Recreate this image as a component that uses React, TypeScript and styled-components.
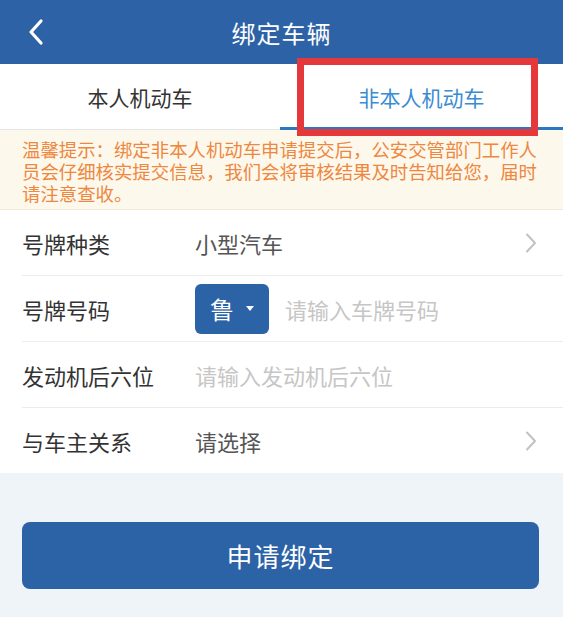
import styled, { createGlobalStyle } from 'styled-components';
import { FC } from 'react';

const GlobalStyle = createGlobalStyle`
	html, body {
		margin: 0;
		padding: 0;
		background: #eff4f9;
	}
	body {
		font-family: 'Noto Sans CJK SC', 'Noto Sans', sans-serif;
	}
`;

const BackIcon: FC = () => (
	<svg width="18" height="28" viewBox="0 0 18 28">
		<path d="M14 3 L4 14 L14 25" fill="none" stroke="#fff" strokeWidth="3.2" strokeLinecap="round" strokeLinejoin="round" />
	</svg>
);

const ArrowIcon: FC = () => (
	<svg width="12" height="20" viewBox="0 0 12 20">
		<path d="M2 1.5 L10 10 L2 18.5" fill="none" stroke="#c2c2c2" strokeWidth="2" strokeLinecap="round" strokeLinejoin="round" />
	</svg>
);

type FieldProps = {
	label: string;
	value?: string;
	placeholder?: string;
	arrow?: boolean;
	province?: string;
};

const Field: FC<FieldProps> = ({ label, value, placeholder, arrow, province }) => (
	<Row>
		<Label>{label}</Label>
		<Value>
			{province && (
				<Province>
					{province}
					<Caret />
				</Province>
			)}
			{value ? <Text>{value}</Text> : <Placeholder>{placeholder}</Placeholder>}
		</Value>
		{arrow && (
			<Arrow>
				<ArrowIcon />
			</Arrow>
		)}
	</Row>
);

const App: FC = () => (
	<Page>
		<GlobalStyle />
		<Header>
			<Back>
				<BackIcon />
			</Back>
			<Title>绑定车辆</Title>
		</Header>
		<Tabs>
			<Tab active={false}>本人机动车</Tab>
			<Tab active>非本人机动车</Tab>
			<Highlight />
		</Tabs>
		<Notice>
			温馨提示：绑定非本人机动车申请提交后，公安交管部门工作人员会仔细核实提交信息，我们会将审核结果及时告知给您，届时请注意查收。
		</Notice>
		<Form>
			<Field label="号牌种类" value="小型汽车" arrow />
			<Field label="号牌号码" placeholder="请输入车牌号码" province="鲁" />
			<Field label="发动机后六位" placeholder="请输入发动机后六位" />
			<Field label="与车主关系" value="请选择" arrow />
		</Form>
		<Footer>
			<SubmitButton>申请绑定</SubmitButton>
		</Footer>
	</Page>
);

const Page = styled.div`
	width: 563px;
	min-height: 617px;
	background: #eff4f9;
	display: flex;
	flex-direction: column;
`;

const Header = styled.div`
	position: relative;
	height: 64px;
	background: #2d63a6;
	display: flex;
	align-items: center;
	justify-content: center;
`;

const Back = styled.div`
	position: absolute;
	left: 27px;
	top: 18px;
	display: flex;
`;

const Title = styled.div`
	color: #fff;
	font-size: 24px;
	letter-spacing: 1px;
`;

const Tabs = styled.div`
	position: relative;
	display: grid;
	grid-template-columns: 280px 1fr;
	height: 66px;
	background: #fff;
`;

const Tab = styled.div<{ active: boolean }>`
	display: flex;
	align-items: center;
	justify-content: center;
	font-size: 21px;
	color: ${(props) => (props.active ? '#3a8cd2' : '#333')};
	border-bottom: ${(props) => (props.active ? '3px solid #2c78c0' : '1px solid #e6e6e6')};
	padding-top: ${(props) => (props.active ? '2px' : '0')};
`;

const Highlight = styled.div`
	position: absolute;
	left: 297px;
	top: -6px;
	width: 241px;
	height: 78px;
	box-sizing: border-box;
	border: 7px solid #e5383b;
	pointer-events: none;
`;

const Notice = styled.div`
	background: #fdf8ec;
	color: #ee8740;
	font-size: 18.4px;
	line-height: 22px;
	padding: 8px 22px 5px;
	border-bottom: 1px solid #efe9dc;
`;

const Form = styled.div`
	background: #fff;
	padding-left: 22px;
`;

const Row = styled.div`
	display: flex;
	align-items: center;
	height: 65px;
	padding-right: 26px;
	border-bottom: 1px solid #ececec;
	&:last-child {
		border-bottom: none;
	}
`;

const Label = styled.div`
	width: 173px;
	flex-shrink: 0;
	font-size: 22px;
	color: #333;
`;

const Value = styled.div`
	flex: 1;
	display: flex;
	align-items: center;
	gap: 16px;
	font-size: 22px;
`;

const Text = styled.span`
	color: #555;
`;

const Placeholder = styled.span`
	color: #c6c6c6;
`;

const Province = styled.div`
	display: flex;
	align-items: center;
	justify-content: center;
	gap: 12px;
	width: 74px;
	height: 50px;
	border-radius: 6px;
	background: #2c62a6;
	color: #fff;
	font-size: 24px;
`;

const Caret = styled.span`
	width: 0;
	height: 0;
	border-left: 4px solid transparent;
	border-right: 4px solid transparent;
	border-top: 5px solid #fff;
`;

const Arrow = styled.div`
	display: flex;
`;

const Footer = styled.div`
	padding: 49px 24px 0 22px;
`;

const SubmitButton = styled.button`
	width: 100%;
	height: 67px;
	border: none;
	border-radius: 8px;
	background: #2c62a6;
	color: #fff;
	font-family: 'Noto Sans CJK SC', 'Noto Sans', sans-serif;
	font-size: 26px;
	letter-spacing: 1px;
`;

export default App;
